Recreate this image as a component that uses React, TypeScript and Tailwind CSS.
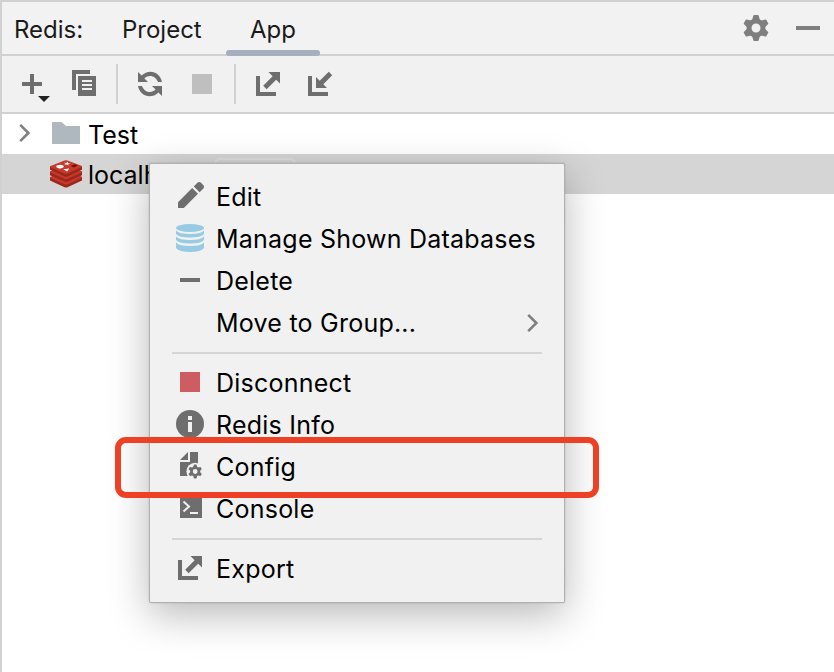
import type { ReactNode } from "react";

const GRAY = "#6e6e6e";

function Icon({ children, className = "" }: { children?: ReactNode; className?: string }) {
  return (
    <svg viewBox="0 0 32 32" className={`block h-8 w-8 shrink-0 ${className}`} fill={GRAY}>
      {children}
    </svg>
  );
}

const TEETH = [0, 60, 120, 180, 240, 300];

function Gear({ cx, cy, scale, fill, hole = 7 }: { cx: number; cy: number; scale: number; fill: string; hole?: number }) {
  return (
    <g transform={`translate(${cx} ${cy}) scale(${scale})`}>
      <circle r={hole} fill="none" stroke={fill} strokeWidth="5" />
      {TEETH.map((a) => (
        <path key={a} d="M-4 -7.5L-2.7 -12.2Q-2.5 -13 -1.7 -13H1.7Q2.5 -13 2.7 -12.2L4 -7.5Z" fill={fill} transform={`rotate(${a})`} />
      ))}
    </g>
  );
}

function ExportIcon() {
  return (
    <Icon>
      <path d="M4 8H8V24H24V28H4Z" />
      <path d="M16.5 4H28V15.5L24.2 11.8L14.6 21.2L11.2 17.8L20.6 8.2Z" />
    </Icon>
  );
}

function ImportIcon() {
  return (
    <Icon>
      <path d="M4 8H8V24H24V28H4Z" />
      <path d="M12 20V9L15.7 12.7L24.8 3.8L28.2 7.2L19.3 16.3L23 20Z" />
    </Icon>
  );
}

function RedisIcon() {
  return (
    <Icon>
      {[10.8, 5.4, 0].map((dy) => (
        <g key={dy} transform={`translate(0 ${dy})`}>
          <path d="M0 8.2V11.8L14.5 18.4Q16 19.1 17.5 18.4L32 11.8V8.2Z" fill="#9c281c" />
          <path d="M0 8.2L14.5 2.5Q16 1.8 17.5 2.5L32 8Q32.4 8.5 31.5 9L17.5 15.4Q16 16.1 14.5 15.4L.5 9.2Q-.2 8.8 0 8.2Z" fill="#c6392b" />
        </g>
      ))}
      <ellipse cx="10" cy="8.6" rx="3.7" ry="1.8" fill="#fff" />
      <path d="M14 4.8L16.3 5L17.5 3.7L18 5.1L20.5 5.3L18.4 6.1L18.5 7.5L16.6 6.4L14.2 6.8L15.6 5.8ZM13.2 11.3L19.3 10.5L17.2 13.6Z" fill="#fff" />
      <path d="M21 8L25 6.2L27.6 7.6L24 9.4Z" fill="#7a0c00" />
    </Icon>
  );
}

function MenuItem({ icon, label, submenu = false }: { icon?: ReactNode; label: string; submenu?: boolean }) {
  return (
    <div className="flex h-[42px] items-center pr-[25px] pl-6">
      <div className="-mt-[2px] h-8 w-8">{icon}</div>
      <span className="ml-[10px] whitespace-nowrap tracking-[0.23px]">{label}</span>
      {submenu && (
        <svg viewBox="0 0 12 20" className="ml-auto h-5 w-3" fill="none" stroke="#7f7f7f" strokeWidth="2.6">
          <path d="M1.2 1.8L9.4 10L1.2 18.2" />
        </svg>
      )}
    </div>
  );
}

function Divider() {
  return <div className="mx-[22px] my-2 h-[2px] bg-[#d5d5d5]" />;
}

function ContextMenu() {
  return (
    <div className="absolute top-[161px] left-[147px] h-[440px] w-[416px] rounded-[2px] border border-[#b0b0b0] bg-[#f1f1f1] pt-3 shadow-[0_12px_40px_rgba(0,0,0,0.28),0_0_2px_rgba(0,0,0,0.18)]">
      <MenuItem
        label="Edit"
        icon={
          <Icon>
            <path d="M4 22.2L18.2 8L24 13.8L9.8 28H4Z" />
            <path d="M19.8 6.4L23.6 2.6Q25.2 1.2 26.8 2.6L29.4 5.2Q30.8 6.8 29.4 8.4L25.6 12.2Z" />
          </Icon>
        }
      />
      <MenuItem
        label="Manage Shown Databases"
        icon={
          <Icon>
            <g fill="#97cbe3">
              <ellipse cx="16" cy="6" rx="14" ry="4" />
              <path d="M2 8.5Q5 12 16 12T30 8.5V12Q27 15.5 16 15.5T2 12Z" />
              <path d="M2 14.5Q5 18 16 18T30 14.5V18Q27 21.5 16 21.5T2 18Z" />
              <path d="M2 20.5Q5 24 16 24T30 20.5V26Q27 30 16 30T2 26Z" />
            </g>
          </Icon>
        }
      />
      <MenuItem label="Delete" icon={<Icon><path d="M6 14H26V18H6Z" /></Icon>} />
      <MenuItem label="Move to Group..." submenu />
      <Divider />
      <MenuItem label="Disconnect" icon={<Icon><path d="M6 6H26V26H6Z" fill="#cd5d62" /></Icon>} />
      <MenuItem
        label="Redis Info"
        icon={
          <Icon>
            <circle cx="16" cy="16" r="14" />
            <path d="M14 8H18V12H14ZM14 14H18V24H14Z" fill="#f1f1f1" />
          </Icon>
        }
      />
      <MenuItem
        label="Config"
        icon={
          <Icon>
            <path d="M6 10L14 2V10Z" />
            <path d="M16 2H24V26H6V12H16Z" />
            <circle cx="21.2" cy="21.5" r="8.8" fill="#f1f1f1" />
            <Gear cx={21.2} cy={21.5} scale={0.53} fill={GRAY} />
          </Icon>
        }
      />
      <MenuItem
        label="Console"
        icon={
          <Icon>
            <path d="M6 4H28V26H6Z" />
            <path d="M9.5 9.5L15 14.5L9.5 19.5M16 21H24" fill="none" stroke="#f1f1f1" strokeWidth="2" />
          </Icon>
        }
      />
      <Divider />
      <MenuItem label="Export" icon={<ExportIcon />} />
    </div>
  );
}

export default function App() {
  return (
    <div className="relative flex h-[672px] w-[834px] flex-col overflow-hidden border-t-2 border-l-2 border-[#d1d1d1] bg-white font-['Inter',sans-serif] text-[25px] leading-[30px] text-black">
      <header className="flex h-[54px] shrink-0 border-b-2 border-[#d1d1d1] bg-[#f2f2f2] text-[24px] text-[#1a1a1a]">
        <span className="w-[96px] pt-[13px] pl-3">Redis:</span>
        <span className="w-[128px] pt-[13px] pl-6">Project</span>
        <div className="flex h-[54px] w-[94px] flex-col items-center justify-between pt-[13px]">
          <span>App</span>
          <span className="h-[6px] w-full rounded-full bg-[#a5afbd]" />
        </div>
        <div className="ml-auto flex gap-5 pt-[10px] pr-[10px]">
          <Icon><Gear cx={16} cy={16} scale={1} fill="#7f7f7f" /></Icon>
          <Icon><path d="M4 14H28V18H4Z" fill="#7f7f7f" /></Icon>
        </div>
      </header>

      <div className="flex h-[58px] shrink-0 items-center border-b-2 border-[#d1d1d1] bg-[#f1f1f1] pl-[14px]">
        <Icon className="overflow-visible">
          <path d="M14 6H18V14H26V18H18V26H14V18H6V14H14Z" />
          <path d="M22 28H34L28 34Z" fill="#222" />
        </Icon>
        <Icon className="ml-5">
          <path d="M4 2H22V6H8V22H4Z" />
          <path d="M10 8H28V28H10Z" />
          <path d="M14 12H24V14H14ZM14 16H24V18H14ZM14 20H24V22H14Z" fill="#f1f1f1" />
        </Icon>
        <div className="ml-4 h-10 w-[2px] bg-[#d1d1d1]" />
        <Icon className="ml-4">
          <path d="M4 4V14H14L10.4 10.4C14.8 6.1 21.6 7.6 24 14H28C26.2 3.7 14.7 0.4 7.6 7.6Z" />
          <path d="M4 4V14H14L10.4 10.4C14.8 6.1 21.6 7.6 24 14H28C26.2 3.7 14.7 0.4 7.6 7.6Z" transform="rotate(180 16 16)" />
        </Icon>
        <Icon className="ml-5"><path d="M6 6H26V26H6Z" fill="#bfbfbf" /></Icon>
        <div className="ml-4 h-10 w-[2px] bg-[#d1d1d1]" />
        <div className="ml-4 flex gap-5">
          <ExportIcon />
          <ImportIcon />
        </div>
      </div>

      <div className="flex h-10 shrink-0 items-center">
        <svg viewBox="0 0 12 20" className="-mt-[2px] ml-[17px] h-5 w-3" fill="none" stroke="#7f7f7f" strokeWidth="2.6">
          <path d="M1.2 1.8L9.4 10L1.2 18.2" />
        </svg>
        <Icon className="ml-[17px]">
          <path d="M4 4H13.5L18 8H32V26H4Z" fill="#afb7bf" />
        </Icon>
        <span className="ml-2 pt-[2px]">Test</span>
      </div>
      <div className="flex h-10 shrink-0 items-center bg-[#d5d5d5] pl-12">
        <RedisIcon />
        <span className="ml-[6px] w-[126px] pt-[2px]">localhost</span>
        <div className="mt-[2px] h-[34px] w-[82px] rounded-[6px] border-2 border-[#dedede]" />
      </div>

      <ContextMenu />
      <div className="absolute top-[435px] left-[113px] h-[61px] w-[484px] rounded-[11px] border-[6px] border-[#ee4025]" />
    </div>
  );
}
